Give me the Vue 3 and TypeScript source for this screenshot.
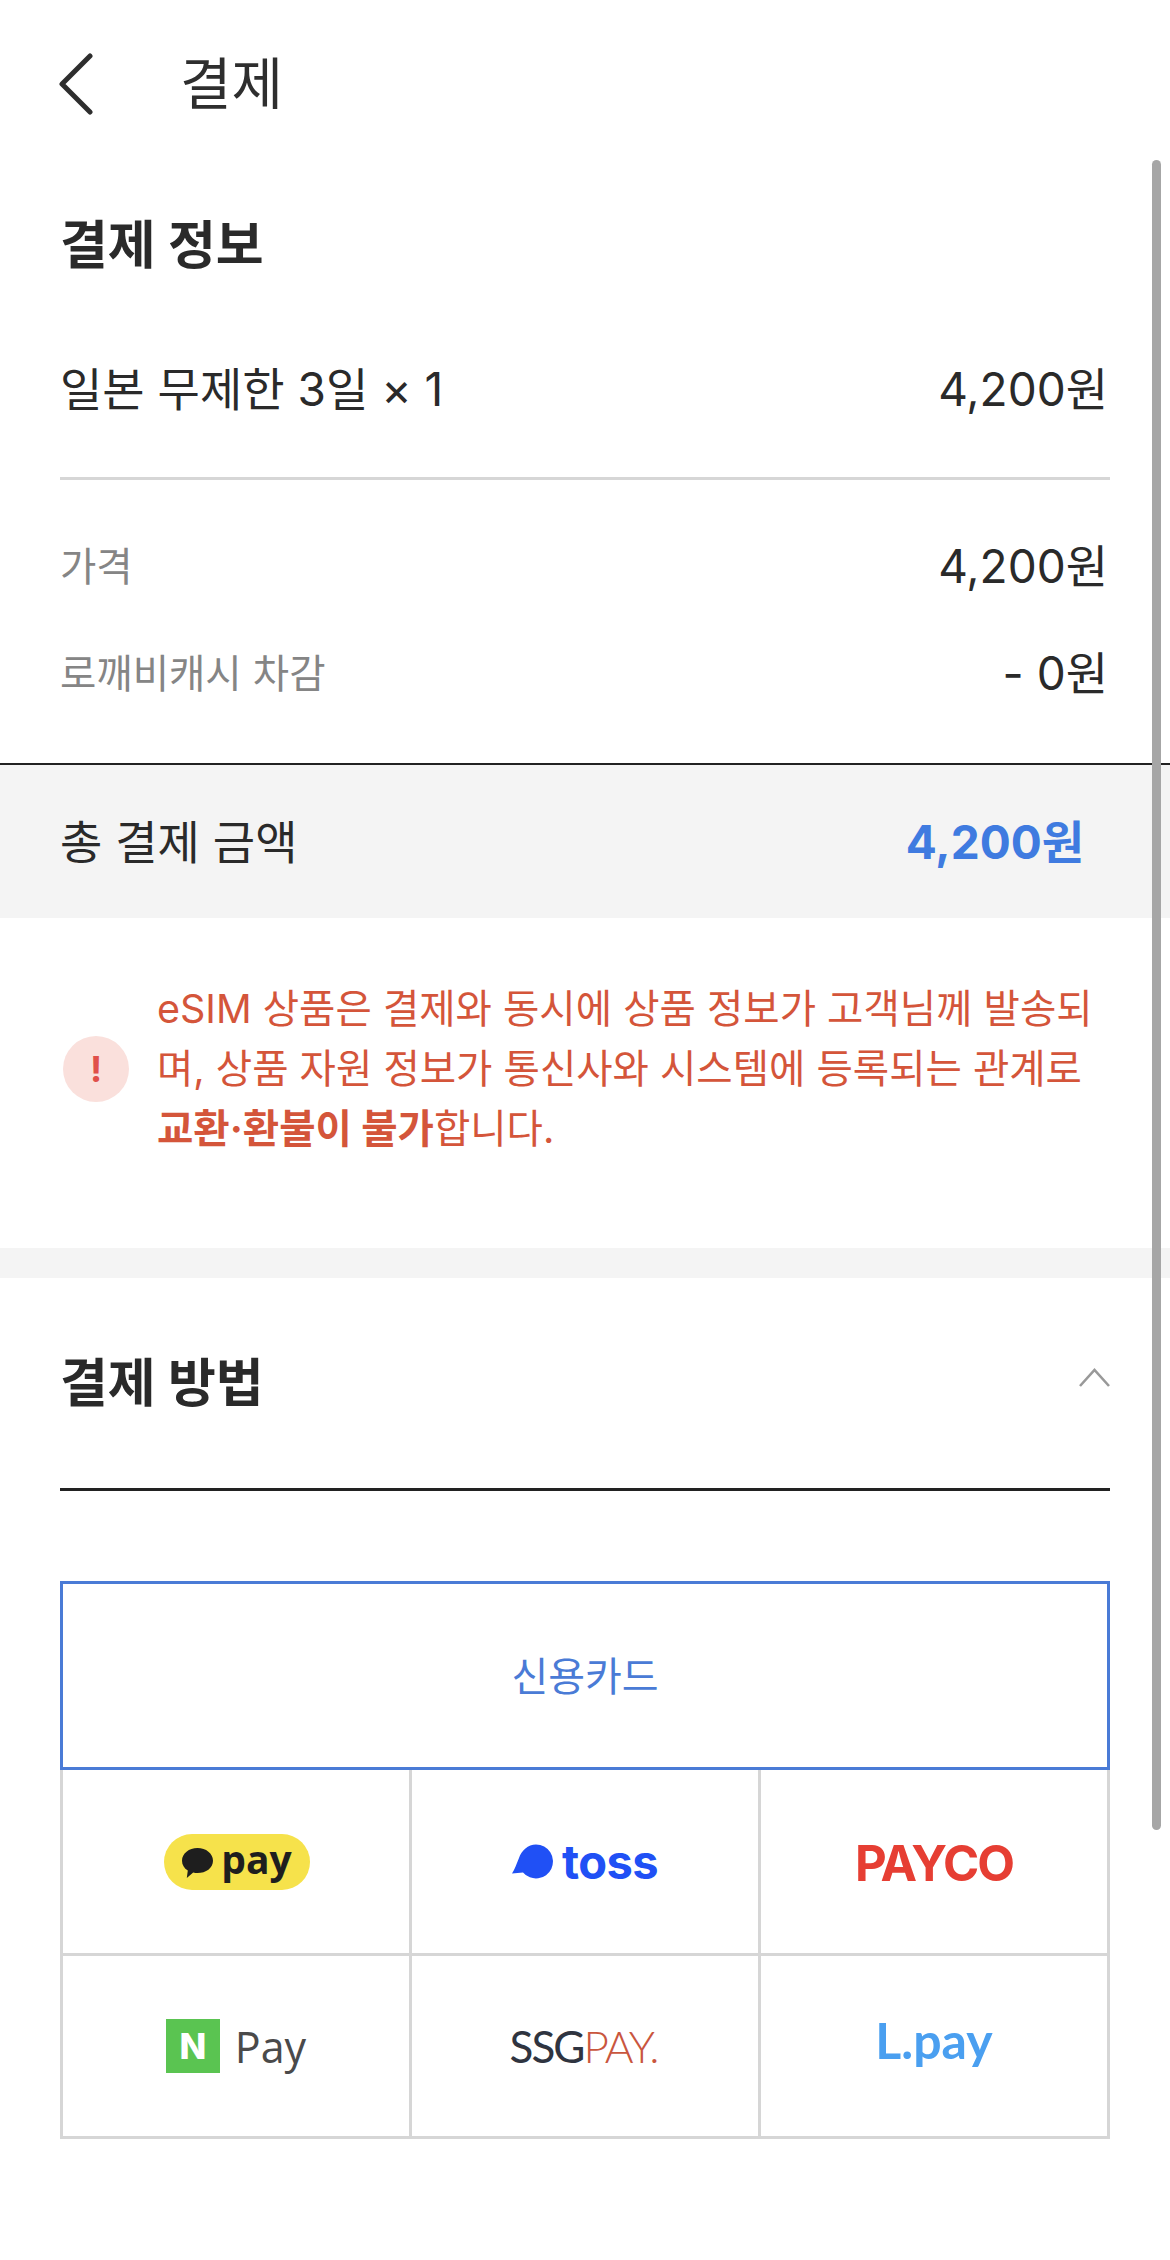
<script setup lang="ts">
const kr = 'x';
void kr;
</script>

<template>
  <div class="page">
    <header class="header">
      <svg class="back" width="34" height="62" viewBox="0 0 34 62">
        <polyline points="31,3 3,31 31,59" fill="none" stroke="#2e2e2e" stroke-width="5" stroke-linecap="round" stroke-linejoin="round" />
      </svg>
      <h1 class="title">결제</h1>
    </header>

    <section class="info">
      <h2 class="section-title">결제 정보</h2>
      <div class="row item"><span>일본 무제한 3일 × 1</span><span class="amount">4,200원</span></div>
      <div class="divider"></div>
      <div class="row price"><span class="label">가격</span><span class="amount">4,200원</span></div>
      <div class="row deduct"><span class="label">로깨비캐시 차감</span><span class="amount">- 0원</span></div>
    </section>

    <div class="total">
      <span class="total-label">총 결제 금액</span>
      <span class="total-amount">4,200원</span>
    </div>

    <div class="notice">
      <div class="notice-icon">!</div>
      <p class="notice-text">eSIM 상품은 결제와 동시에 상품 정보가 고객님께 발송되<br />며, 상품 자원 정보가 통신사와 시스템에 등록되는 관계로<br /><b>교환·환불이 불가</b>합니다.</p>
    </div>

    <div class="band"></div>

    <section class="method">
      <div class="method-head">
        <h2 class="section-title">결제 방법</h2>
        <svg class="up" width="31" height="20" viewBox="0 0 31 20">
          <polyline points="1,18 15.500,2 30,18" fill="none" stroke="#999" stroke-width="2.6" />
        </svg>
      </div>
      <div class="method-line"></div>

      <div class="card-box"><span class="card-label">신용카드</span></div>
      <div class="grid">
        <div class="cell">
          <div class="kakao">
            <svg width="31" height="31" viewBox="0 0 31 31">
              <path d="M15.5 0C24 0 31 5.500 31 12.700 31 20 24 25 15.500 25 14 25 12.500 24.900 11.200 24.500L4.800 30 5.800 22.500C2.200 20.200 0 16.800 0 12.700 0 5.500 7 0 15.500 0Z" fill="#1e1e1e" />
            </svg>
            <span class="kakao-text">pay</span>
          </div>
        </div>
        <div class="cell">
          <div class="toss">
            <svg width="41" height="35" viewBox="0 0 41 35">
              <path d="M24 0.500a17 17 0 1 1-13 28L0 29.500C3 25 4.500 20 7 14 9.500 6.500 16 0.500 24 0.500Z" fill="#2050f5" />
            </svg>
            <span class="toss-text">toss</span>
          </div>
        </div>
        <div class="cell"><span class="payco">PAYCO</span></div>
        <div class="cell">
          <div class="npay">
            <span class="n-box">N</span>
            <span class="n-text">Pay</span>
          </div>
        </div>
        <div class="cell">
          <span class="ssg"><span class="ssg-a">SSG</span><span class="ssg-b">PAY.</span></span>
        </div>
        <div class="cell"><span class="lpay">L.pay</span></div>
      </div>
    </section>

    <div class="scrollbar"></div>
  </div>
</template>

<style>
html, body { margin: 0; background: #fff; }
</style>

<style scoped>
.page {
  position: relative;
  width: 1170px;
  height: 2260px;
  overflow: hidden;
  background: #fff;
  color: #2a2a2a;
  font-family: Inter, "Noto Sans CJK KR", sans-serif;
}
.header {
  height: 168px;
  display: flex;
  align-items: center;
  padding-left: 59px;
  box-sizing: border-box;
}
.back { flex: none; }
.title {
  margin: 0 0 0 87px;
  font-size: 56px;
  font-weight: 400;
  line-height: 70px;
  color: #2e2e2e;
}
.info { padding: 0 60px; }
.section-title {
  margin: 0;
  font-size: 52px;
  font-weight: 700;
  line-height: 70px;
  color: #2a2a2a;
}
.info .section-title { margin-top: 43px; }
.row {
  display: flex;
  justify-content: space-between;
  align-items: center;
  height: 70px;
  font-size: 46px;
  padding-right: 2px;
}
.item { margin-top: 70px; }
.divider { height: 3px; margin-top: 56px; background: #d6d6d6; }
.price { margin-top: 48px; }
.deduct { margin-top: 37px; }
.label { font-size: 39.5px; color: #858585; }
.total {
  height: 153px;
  margin-top: 58px;
  border-top: 2px solid #222;
  background: #f4f4f4;
  display: flex;
  align-items: center;
  justify-content: space-between;
  padding: 0 86px 6px 60px;
  box-sizing: border-box;
  min-height: 155px;
}
.total-label { font-size: 46px; }
.total-amount { font-size: 46px; font-weight: 700; color: #3f7be0; }
.notice {
  height: 329px;
  display: flex;
  align-items: center;
  padding: 0 0 28px 63px;
  box-sizing: border-box;
}
.notice-icon {
  flex: none;
  width: 66px;
  height: 66px;
  border-radius: 50%;
  background: #fae0dc;
  color: #e0504a;
  font-size: 36px;
  font-weight: 700;
  line-height: 66px;
  text-align: center;
}
.notice-text {
  margin: 0 0 0 28px;
  font-size: 39.5px;
  line-height: 60px;
  color: #d4553a;
  white-space: nowrap;
}
.notice-text b { font-weight: 700; }
.band { height: 30px; margin-top: 1px; background: #f4f4f4; }
.method { padding: 71px 60px 0; }
.method-head {
  display: flex;
  justify-content: space-between;
  align-items: flex-start;
}
.up { margin-top: 19px; }
.method-line { height: 3px; margin-top: 69px; background: #222; }
.card-box {
  height: 189px;
  margin-top: 90px;
  box-sizing: border-box;
  border: 3px solid #4a7bd6;
  color: #4a7bd6;
  font-size: 40px;
  display: flex;
  align-items: center;
  justify-content: center;
}
.card-label { margin-bottom: 4px; }
.grid {
  display: grid;
  grid-template-columns: repeat(3, 1fr);
  grid-template-rows: 186px 183px;
  border-left: 3px solid #d6d6d6;
}
.cell {
  border-right: 3px solid #d6d6d6;
  border-bottom: 3px solid #d6d6d6;
  display: flex;
  align-items: center;
  justify-content: center;
}
.kakao {
  width: 146px;
  height: 56px;
  margin-left: 2px;
  border-radius: 28px;
  background: #f6e24b;
  display: flex;
  align-items: center;
  justify-content: center;
  gap: 8px;
}
.kakao svg { margin-top: 3px; }
.kakao-text {
  font-family: "Open Sans", sans-serif;
  font-size: 39px;
  font-weight: 700;
  line-height: 56px;
  color: #1e1e1e;
  margin-top: -6px;
}
.toss { display: flex; align-items: center; gap: 9px; }
.toss-text {
  font-family: Inter, sans-serif;
  font-size: 47px;
  font-weight: 700;
  line-height: 50px;
  color: #2050f5;
  letter-spacing: -0.5px;
}
.payco {
  font-family: Inter, sans-serif;
  font-size: 49px;
  font-weight: 700;
  color: #e63e33;
  letter-spacing: -2px;
  margin-top: 4px;
}
.npay { display: flex; align-items: center; gap: 15px; }
.n-box {
  width: 54px;
  height: 54px;
  background: #5ac451;
  color: #fff;
  font-family: Inter, sans-serif;
  font-size: 35px;
  font-weight: 800;
  line-height: 54px;
  text-align: center;
}
.n-text {
  font-family: "Open Sans", sans-serif;
  font-size: 43px;
  color: #4a4a4a;
}
.ssg {
  font-family: Lato, sans-serif;
  font-size: 44px;
  letter-spacing: -2px;
  margin-right: 3px;
}
.ssg-a { color: #2f3440; font-weight: 400; }
.ssg-b { color: #c9563e; font-weight: 300; }
.lpay {
  font-family: Lato, sans-serif;
  font-size: 50px;
  font-weight: 700;
  color: #4a9ff0;
  margin-bottom: 12px;
}
.scrollbar {
  position: absolute;
  left: 1152px;
  top: 160px;
  width: 9px;
  height: 1670px;
  border-radius: 5px;
  background: #a6a6a6;
}
</style>
